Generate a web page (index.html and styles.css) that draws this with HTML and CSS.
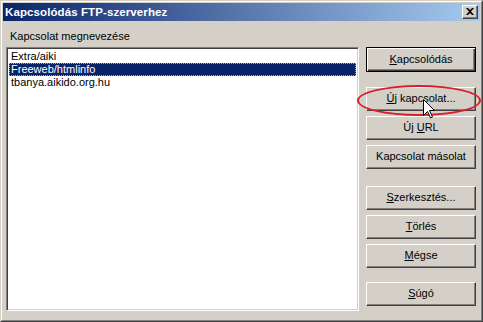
FILE: index.html
```html
<!DOCTYPE html>
<html>
<head>
<meta charset="utf-8">
<link rel="stylesheet" href="styles.css">
</head>
<body>
<div class="window">
  <div class="frame">
    <div class="titlebar">
      <span class="title">Kapcsolódás FTP-szerverhez</span>
      <div class="close">
        <svg width="8" height="7" viewBox="0 0 8 7"><path d="M0 0h2l2 2 2-2h2L5 3.5 8 7H6L4 5 2 7H0l3-3.5z" fill="#000"/></svg>
      </div>
    </div>
    <div class="content">
      <div class="left">
        <div class="label">Kapcsolat megnevezése</div>
        <div class="listbox">
          <div class="item">Extra/aiki</div>
          <div class="item selected">Freeweb/htmlinfo</div>
          <div class="item">tbanya.aikido.org.hu</div>
        </div>
      </div>
      <div class="buttons">
        <div class="btn default"><span><u>K</u>apcsolódás</span></div>
        <div class="btn g1 highlighted"><span><u>Ú</u>j kapcsolat...</span></div>
        <div class="btn g0"><span>Új <u>U</u>RL</span></div>
        <div class="btn g0"><span>Kapcsolat másolat</span></div>
        <div class="btn g2"><span><u>S</u>zerkesztés...</span></div>
        <div class="btn g0"><span><u>T</u>örlés</span></div>
        <div class="btn g0"><span><u>M</u>égse</span></div>
        <div class="btn g3"><span><u>S</u>úgó</span></div>
      </div>
    </div>
  </div>
  <div class="ellipse"></div>
  <svg class="cursor" width="12" height="20" viewBox="0 0 12 20"><path d="M0.5 0.5V16.5L4.5 12.5L7.5 19L9.5 18L6.5 11.5H11.5Z" fill="#fff" stroke="#000" stroke-width="1"/></svg>
</div>
</body>
</html>
```

FILE: styles.css
```css
* { box-sizing: border-box; }
html, body { margin: 0; padding: 0; background: #d4d0c8; }
body {
  font-family: "Liberation Sans", Arial, sans-serif;
  font-size: 11px;
  color: #000;
}
.window {
  position: relative;
  width: 483px;
  height: 322px;
  border: 1px solid;
  border-color: #d4d0c8 #404040 #404040 #d4d0c8;
  background: #d4d0c8;
}
.frame {
  width: 100%;
  height: 100%;
  border: 1px solid;
  border-color: #fff #808080 #808080 #fff;
  padding: 1px;
}
.titlebar {
  height: 18px;
  background: linear-gradient(to right, #0a246a, #a6caf0);
  display: flex;
  align-items: center;
  justify-content: space-between;
  padding: 0 2px 0 2px;
}
.title {
  color: #fff;
  font-weight: bold;
  font-size: 11.5px;
  letter-spacing: 0.1px;
  line-height: 18px;
}
.close {
  width: 16px;
  height: 14px;
  background: #d4d0c8;
  border: 1px solid;
  border-color: #fff #404040 #404040 #fff;
  box-shadow: inset -1px -1px 0 #808080;
  display: flex;
  align-items: center;
  justify-content: center;
  padding: 0 1px 1px 0;
}
.content {
  display: flex;
  padding: 0 0 0 3px;
}
.left {
  width: 353px;
}
.label {
  margin: 9px 0 0 4px;
  height: 13px;
  line-height: 13px;
  padding-left: 0;
}
.listbox {
  margin-top: 4px;
  height: 264px;
  background: #fff;
  border: 1px solid;
  border-color: #808080 #fff #fff #808080;
  box-shadow: inset 1px 1px 0 #404040, inset -1px -1px 0 #d4d0c8;
  padding: 2px 2px;
}
.item {
  height: 13px;
  line-height: 13px;
  padding-left: 2px;
  white-space: nowrap;
}
.item.selected {
  background: #0a246a;
  color: #fff;
  outline: 1px dotted #d4a860;
  outline-offset: -1px;
}
.buttons {
  margin-left: 7px;
  margin-top: 26px;
  width: 110px;
  display: flex;
  flex-direction: column;
}
.btn {
  height: 24px;
  background: #d4d0c8;
  border: 1px solid;
  border-color: #fff #404040 #404040 #fff;
  box-shadow: inset -1px -1px 0 #808080;
  display: flex;
  align-items: center;
  justify-content: center;
  line-height: 13px;
  padding-bottom: 1px;
}
.btn u { text-underline-offset: 1px; }
.btn.default {
  height: 25px;
  border: 1px solid #000;
  box-shadow: inset 1px 1px 0 #fff, inset -1px -1px 0 #404040, inset -2px -2px 0 #808080;
}
.g0 { margin-top: 5px; }
.g1 { margin-top: 15px; }
.g2 { margin-top: 17px; }
.g3 { margin-top: 14px; }
.ellipse {
  position: absolute;
  left: 356px;
  top: 84px;
  width: 124px;
  height: 31px;
  border: 2px solid #d81e28;
  border-radius: 50%;
}
.cursor {
  position: absolute;
  left: 422px;
  top: 98px;
}
```
